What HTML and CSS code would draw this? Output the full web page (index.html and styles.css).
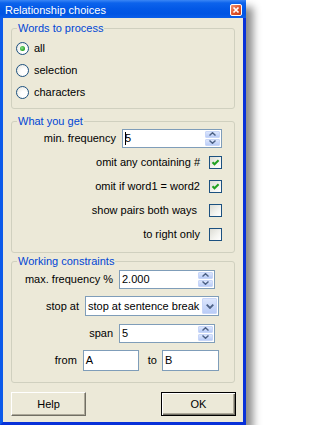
FILE: index.html
```html
<!DOCTYPE html>
<html>
<head>
<meta charset="utf-8">
<title>Relationship choices</title>
<link rel="stylesheet" href="styles.css">
</head>
<body>
<div class="window">
  <div class="titlebar">
    <span class="title">Relationship choices</span>
    <svg class="close" width="12" height="12" viewBox="0 0 12 12">
      <defs>
        <linearGradient id="cg" x1="0" y1="0" x2="1" y2="1">
          <stop offset="0" stop-color="#F39A7C"/>
          <stop offset="0.5" stop-color="#E2582F"/>
          <stop offset="1" stop-color="#C43A17"/>
        </linearGradient>
      </defs>
      <rect x="0.5" y="0.5" width="11" height="11" rx="1.5" fill="url(#cg)" stroke="#fff"/>
      <path d="M3.5 3.5 L8.5 8.5 M8.5 3.5 L3.5 8.5" stroke="#fff" stroke-width="1.7"/>
    </svg>
  </div>
  <div class="frame">
    <fieldset class="group g1">
      <legend>Words to process</legend>
      <div class="radio-row"><span class="radio checked"><span class="dot"></span></span><span>all</span></div>
      <div class="radio-row"><span class="radio"></span><span>selection</span></div>
      <div class="radio-row"><span class="radio"></span><span>characters</span></div>
    </fieldset>

    <fieldset class="group g2">
      <legend>What you get</legend>
      <div class="row spin-row">
        <span>min. frequency</span>
        <div class="spin w100">
          <span class="val"><span class="caret"></span>5</span>
          <span class="spinbtns">
            <span class="sb"><svg width="7" height="4" viewBox="0 0 7 4"><path d="M0.5 3.5 L3.5 0.7 L6.5 3.5" fill="none" stroke="#4D6185" stroke-width="1.4"/></svg></span>
            <span class="sb"><svg width="7" height="4" viewBox="0 0 7 4"><path d="M0.5 0.5 L3.5 3.3 L6.5 0.5" fill="none" stroke="#4D6185" stroke-width="1.4"/></svg></span>
          </span>
        </div>
      </div>
      <div class="row cb-row first">
        <span>omit any containing #</span>
        <span class="check"><svg width="11" height="11" viewBox="0 0 11 11"><path d="M2.5 5.2 L4.5 7.3 L8.6 3.2" fill="none" stroke="#21A121" stroke-width="2"/></svg></span>
      </div>
      <div class="row cb-row">
        <span>omit if word1 = word2</span>
        <span class="check"><svg width="11" height="11" viewBox="0 0 11 11"><path d="M2.5 5.2 L4.5 7.3 L8.6 3.2" fill="none" stroke="#21A121" stroke-width="2"/></svg></span>
      </div>
      <div class="row cb-row wide">
        <span>show pairs both ways</span>
        <span class="check"></span>
      </div>
      <div class="row cb-row">
        <span>to right only</span>
        <span class="check"></span>
      </div>
    </fieldset>

    <fieldset class="group g3">
      <legend>Working constraints</legend>
      <div class="row c-row r19">
        <span>max. frequency %</span>
        <div class="spin w96">
          <span class="val">2.000</span>
          <span class="spinbtns">
            <span class="sb"><svg width="7" height="4" viewBox="0 0 7 4"><path d="M0.5 3.5 L3.5 0.7 L6.5 3.5" fill="none" stroke="#4D6185" stroke-width="1.4"/></svg></span>
            <span class="sb"><svg width="7" height="4" viewBox="0 0 7 4"><path d="M0.5 0.5 L3.5 3.3 L6.5 0.5" fill="none" stroke="#4D6185" stroke-width="1.4"/></svg></span>
          </span>
        </div>
      </div>
      <div class="row c-row r15">
        <span>stop at</span>
        <div class="select">
          <span class="val">stop at sentence break</span>
          <span class="dropbtn"><svg width="8" height="5" viewBox="0 0 8 5"><path d="M0.7 0.7 L4 4 L7.3 0.7" fill="none" stroke="#4D6185" stroke-width="1.8"/></svg></span>
        </div>
      </div>
      <div class="row c-row r19">
        <span>span</span>
        <div class="spin w96">
          <span class="val">5</span>
          <span class="spinbtns">
            <span class="sb"><svg width="7" height="4" viewBox="0 0 7 4"><path d="M0.5 3.5 L3.5 0.7 L6.5 3.5" fill="none" stroke="#4D6185" stroke-width="1.4"/></svg></span>
            <span class="sb"><svg width="7" height="4" viewBox="0 0 7 4"><path d="M0.5 0.5 L3.5 3.3 L6.5 0.5" fill="none" stroke="#4D6185" stroke-width="1.4"/></svg></span>
          </span>
        </div>
      </div>
      <div class="row c-row r15 from-row">
        <span>from</span>
        <span class="text w56">A</span>
        <span class="to">to</span>
        <span class="text w57">B</span>
      </div>
    </fieldset>

    <div class="buttons">
      <span class="btn">Help</span>
      <span class="btn default">OK</span>
    </div>
  </div>
</div>
</body>
</html>
```

FILE: styles.css
```css
* { box-sizing: border-box; }
html, body { margin: 0; padding: 0; background: #fff; }
body {
  font-family: "Liberation Sans", Arial, sans-serif;
  font-size: 11px;
  color: #000;
}
.window {
  width: 246px;
  height: 425px;
  display: flex;
  flex-direction: column;
  box-shadow: 7px 7px 8px rgba(0, 0, 0, 0.45);
}
.titlebar {
  height: 18px;
  flex: none;
  display: flex;
  justify-content: space-between;
  align-items: flex-start;
  padding: 0 4px 0 5px;
  color: #fff;
  background: linear-gradient(#3A86F5 0, #0C63EC 3px, #0258E6 9px, #0054E3 14px, #0A5EEA 18px);
}
.title { line-height: 13px; padding-top: 4px; }
.close { display: block; margin-top: 4px; }
.frame {
  flex: 1;
  display: flex;
  flex-direction: column;
  background: #ECE9D8;
  border-style: solid;
  border-width: 0 3px 3px 3px;
  border-color: #0A4FE2 #0831D9 #0831D9 #0D5BEA;
}
.group {
  margin: 0 8px;
  padding: 0;
  border: 1px solid #D0D0BF;
  border-radius: 3px;
  min-inline-size: 0;
}
.group legend {
  margin-left: 5px;
  padding: 0 1px;
  line-height: 13px;
  color: #0046D5;
}
.g1 { margin-top: 4px; padding: 2px 0 5px 0; }
.g2 { margin-top: 6px; padding: 0 12px 6px 0; }
.g3 { margin-top: 2px; padding: 0 0 11px 0; display: flex; flex-direction: column; gap: 5px; }

.radio-row {
  height: 22px;
  display: flex;
  align-items: center;
  gap: 5px;
  padding-left: 4px;
}
.radio {
  width: 13px;
  height: 13px;
  border: 1px solid #1C5180;
  border-radius: 50%;
  background: radial-gradient(circle at 65% 65%, #fff 30%, #E2E2DA 100%);
  display: flex;
  align-items: center;
  justify-content: center;
}
.radio .dot {
  width: 5px;
  height: 5px;
  border-radius: 50%;
  background: radial-gradient(circle at 40% 40%, #8BE08B 0, #21A121 70%);
}

.row {
  display: flex;
  justify-content: flex-end;
  align-items: center;
  white-space: nowrap;
}
.spin-row { height: 20px; gap: 6px; }
.cb-row { height: 24px; gap: 9px; }
.cb-row.first { margin-top: 2px; }
.cb-row.wide { gap: 12px; }
.check {
  width: 13px;
  height: 13px;
  border: 1px solid #1C5180;
  background: linear-gradient(135deg, #DCDCD4 0%, #F4F4F0 60%, #fff 100%);
  display: flex;
  align-items: center;
  justify-content: center;
}
.check svg { display: block; }

.spin, .select {
  display: flex;
  border: 1px solid #7F9DB9;
  background: #fff;
  padding: 1px;
}
.spin { height: 19px; }
.select { height: 20px; width: 134px; }
.w100 { width: 100px; }
.w96 { width: 96px; }
.val {
  flex: 1;
  display: flex;
  align-items: center;
  padding-left: 1px;
  overflow: hidden;
}
.caret {
  display: inline-block;
  width: 1px;
  height: 13px;
  background: #000;
  margin-right: -1px;
}
.spinbtns {
  width: 15px;
  display: flex;
  flex-direction: column;
  gap: 1px;
}
.sb, .dropbtn {
  flex: 1;
  display: flex;
  align-items: center;
  justify-content: center;
  background: linear-gradient(#DCE6FD, #B9CCF7);
  border: 1px solid #C8D6F8;
  border-radius: 1px;
}
.sb svg, .dropbtn svg { display: block; }
.dropbtn { flex: none; width: 15px; }

.c-row { height: 22px; gap: 6px; }
.r19 { padding-right: 19px; }
.r15 { padding-right: 15px; }
.text {
  height: 21px;
  border: 1px solid #7F9DB9;
  background: #fff;
  padding-left: 2px;
  display: flex;
  align-items: center;
}
.w56 { width: 56px; }
.w57 { width: 57px; }
.from-row .to { margin-left: 3px; margin-right: -1px; }

.buttons {
  margin-top: 9px;
  display: flex;
  justify-content: space-between;
  padding: 0 7px 0 8px;
}
.btn {
  width: 75px;
  height: 24px;
  display: flex;
  align-items: center;
  justify-content: center;
  background: #ECE9D8;
  border: 1px solid;
  border-color: #fff #716F64 #716F64 #fff;
  box-shadow: inset -1px -1px 0 #ACA899;
}
.btn.default {
  border: 1px solid #000;
  box-shadow: inset 1px 1px 0 #fff, inset -1px -1px 0 #716F64, inset -2px -2px 0 #ACA899;
}
```
